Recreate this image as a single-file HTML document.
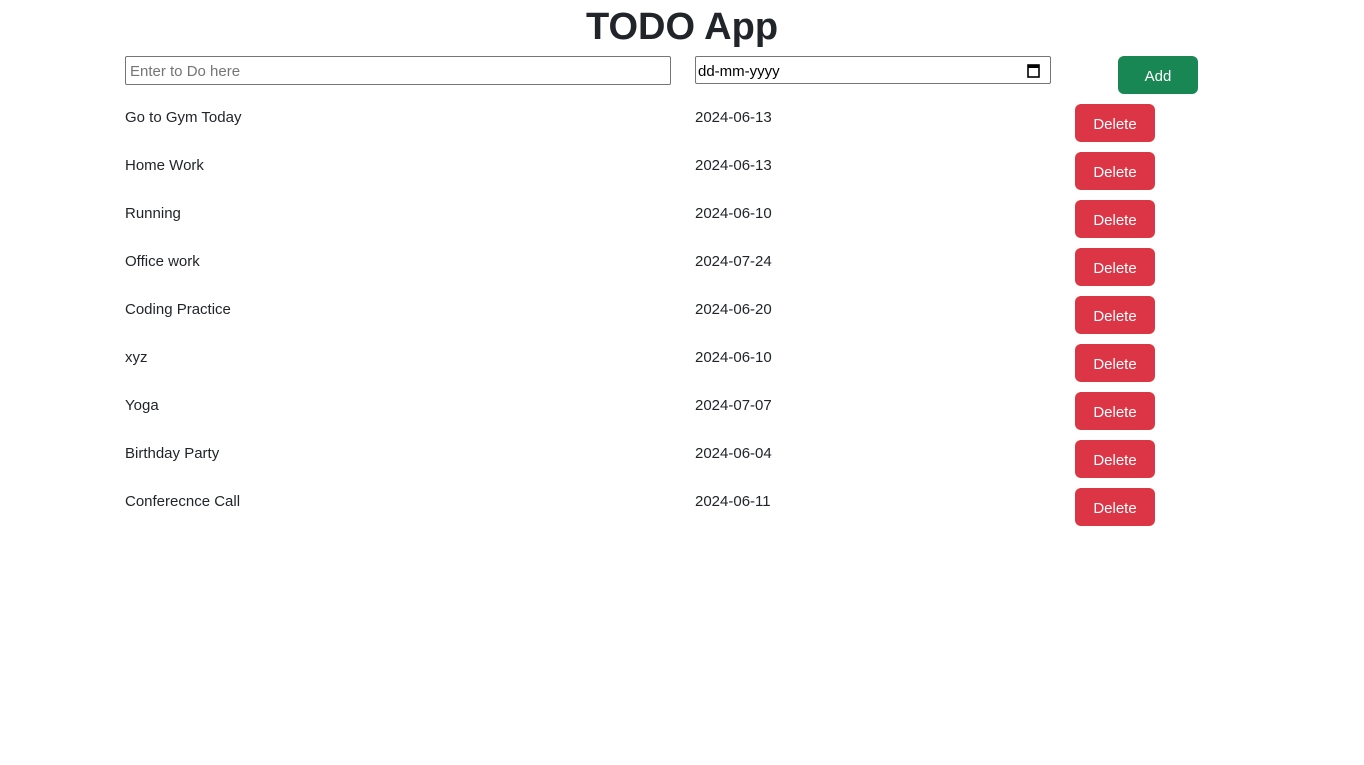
<!DOCTYPE html>
<html><head><style>
body{margin:0;background:#fff;font-family:"Liberation Sans",sans-serif;color:#212529;width:1364px;height:765px;position:relative;overflow:hidden}
h1{position:absolute;top:3px;left:0;width:1364px;text-align:center;margin:0;font-size:38px;font-weight:bold;line-height:48px}
.inp{position:absolute;box-sizing:border-box;border:1px solid #767676;border-radius:2px;font-size:15px;padding:0 4px;display:flex;align-items:center}
.btn{position:absolute;width:80px;height:38px;border-radius:6px;color:#fff;font-size:15px;display:flex;align-items:center;justify-content:center;padding-top:2px;box-sizing:border-box}
.t{position:absolute;font-size:15px;line-height:20px}
</style></head><body>
<h1>TODO App</h1>
<div class="inp" style="left:125px;top:56px;width:546px;height:29px;color:#757575;padding-top:2px">Enter to Do here</div>
<div class="inp" style="left:695px;top:56px;width:356px;height:28px;padding-left:2px;padding-top:2px;color:#000">dd-mm-yyyy
<svg style="position:absolute;right:10px;top:6px" width="13" height="15" viewBox="0 0 13 15"><rect x="1" y="2" width="11" height="12" fill="none" stroke="#000" stroke-width="1.6"/><rect x="1" y="2" width="11" height="3" fill="#000"/></svg></div>
<div class="btn" style="left:1118px;top:56px;background:#198754">Add</div>
<div id="rows"></div>
<script>
var d=[["Go to Gym Today","2024-06-13"],["Home Work","2024-06-13"],["Running","2024-06-10"],["Office work","2024-07-24"],["Coding Practice","2024-06-20"],["xyz","2024-06-10"],["Yoga","2024-07-07"],["Birthday Party","2024-06-04"],["Conferecnce Call","2024-06-11"]];
var h="";d.forEach(function(r,i){var y=108+48*i;h+='<div class="t" style="left:125px;top:'+y+'px">'+r[0]+'</div><div class="t" style="left:695px;top:'+y+'px">'+r[1]+'</div><div class="btn" style="left:1075px;top:'+(y-4)+'px;background:#dc3545">Delete</div>';});
document.getElementById("rows").innerHTML=h;
</script>
</body></html>
